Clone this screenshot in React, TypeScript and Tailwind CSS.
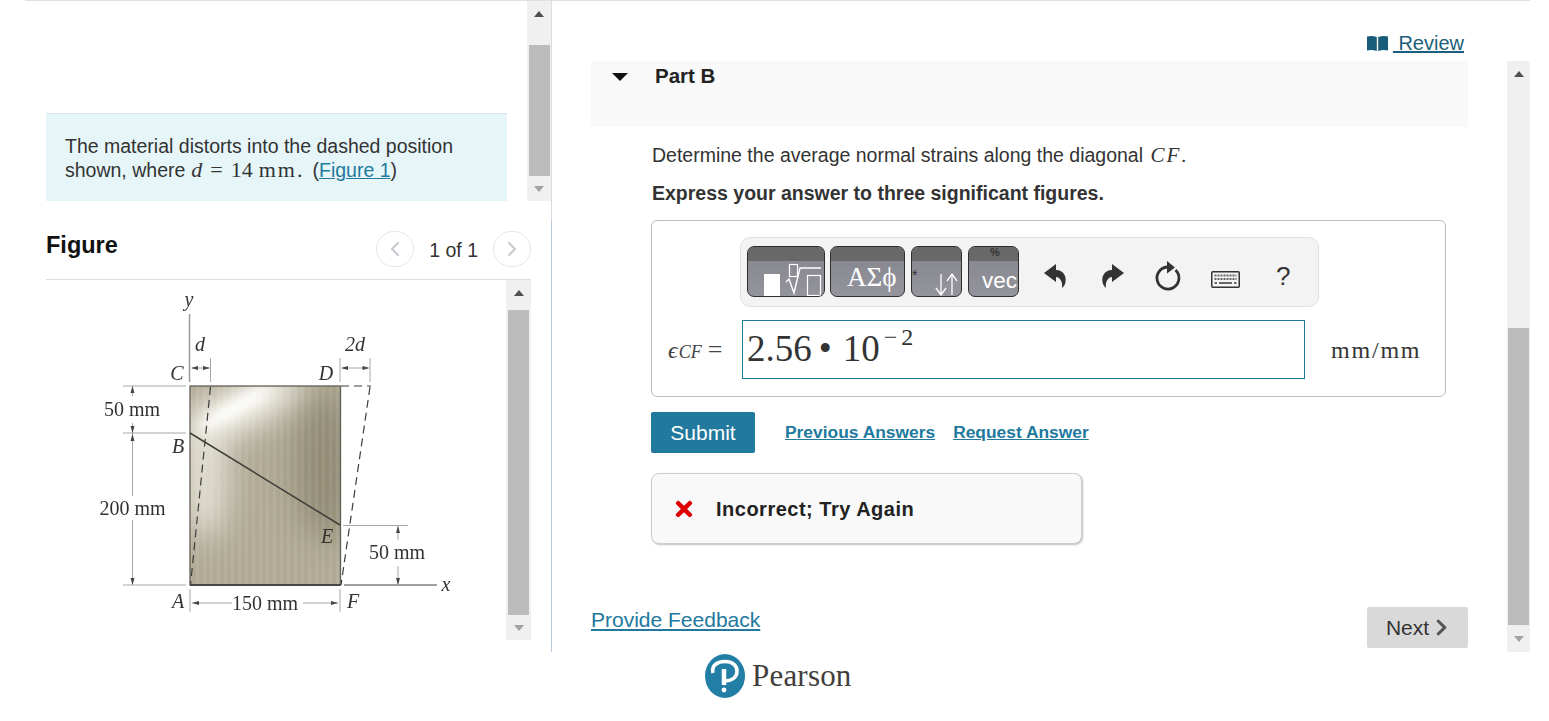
import { ChevronLeft, ChevronRight } from "lucide-react";
import { FaChevronRight, FaTimes } from "react-icons/fa";

const serif = "font-['Liberation_Serif',serif]";

// Fake browser scrollbar: top arrow, thumb, bottom arrow
function Scrollbar({ className, gapTop, thumb }: { className: string; gapTop: string; thumb: string }) {
  return (
    <div className={`flex flex-col items-center bg-[#f0f0f0] shrink-0 ${className}`}>
      <div className="h-[25px] shrink-0 flex items-center justify-center">
        <div className="w-0 h-0 border-x-[5.5px] border-x-transparent border-b-[6px] border-b-[#505050]" />
      </div>
      <div className={`shrink-0 ${gapTop}`} />
      <div className={`w-[21px] shrink-0 bg-[#bcbcbc] ${thumb}`} />
      <div className="flex-1 flex items-center justify-center">
        <div className="w-0 h-0 border-x-[5.5px] border-x-transparent border-t-[6px] border-t-[#a3a3a3]" />
      </div>
    </div>
  );
}

function Arrow({ x, y, dir }: { x: number; y: number; dir: "l" | "r" | "u" | "d" }) {
  const pts = {
    l: `${x},${y} ${x + 7},${y - 2} ${x + 7},${y + 2}`,
    r: `${x},${y} ${x - 7},${y - 2} ${x - 7},${y + 2}`,
    u: `${x},${y} ${x - 2},${y + 7} ${x + 2},${y + 7}`,
    d: `${x},${y} ${x - 2},${y - 7} ${x + 2},${y - 7}`,
  }[dir];
  return <polygon points={pts} fill="#444" />;
}

function Figure() {
  const dim = "#a8a8a8";
  return (
    <svg viewBox="46 280 460 360" className="w-[460px] h-[360px] shrink-0">
      <defs>
        <clipPath id="plateClip">
          <rect x="190" y="386" width="150.5" height="199" />
        </clipPath>
        <pattern id="grain" width="7" height="10" patternUnits="userSpaceOnUse">
          <rect width="3" height="10" fill="#ffffff" opacity="0.07" />
        </pattern>
        <filter id="soft">
          <feGaussianBlur stdDeviation="0.45" />
        </filter>
        <filter id="glow" x="-80%" y="-80%" width="260%" height="260%">
          <feGaussianBlur stdDeviation="15" />
        </filter>
        <filter id="glowTight" x="-50%" y="-80%" width="200%" height="260%">
          <feGaussianBlur stdDeviation="6" />
        </filter>
      </defs>
      <g filter="url(#soft)">
        <g clipPath="url(#plateClip)">
          <rect x="190" y="386" width="150.5" height="199" fill="#b0aa95" />
          <ellipse cx="325" cy="465" rx="30" ry="75" fill="#8c866f" opacity="0.85" filter="url(#glow)" />
          <ellipse cx="205" cy="475" rx="22" ry="65" fill="#e2dfd3" filter="url(#glow)" />
          <ellipse cx="245" cy="405" rx="62" ry="22" transform="rotate(-28 245 405)" fill="#f4f2ea" filter="url(#glow)" />
          <ellipse cx="235" cy="408" rx="42" ry="7" transform="rotate(-30 235 408)" fill="#ffffff" filter="url(#glowTight)" />
          <rect x="190" y="386" width="150.5" height="199" fill="url(#grain)" />
        </g>
        <rect x="190" y="386" width="150.5" height="199" fill="none" stroke="#625f54" strokeWidth="1.3" />
        <line x1="190" y1="585" x2="340.5" y2="585" stroke="#333" strokeWidth="1.6" />

        {/* dashed deformed shape */}
        <g stroke="#3c3c3c" strokeWidth="1.2" strokeDasharray="8 5" fill="none">
          <line x1="210.5" y1="387" x2="190.5" y2="585" />
          <line x1="370" y1="387" x2="341" y2="585" />
          <line x1="341" y1="386" x2="371" y2="386" />
        </g>

        <line x1="190" y1="433" x2="340" y2="525" stroke="#3f3d38" strokeWidth="1.5" />

        {/* axes */}
        <line x1="189.5" y1="314" x2="189.5" y2="382" stroke="#999" strokeWidth="1.5" />
        <line x1="344" y1="585" x2="437" y2="585" stroke="#444" strokeWidth="1.2" />

        {/* dimension lines */}
        <g stroke={dim} strokeWidth="1" fill="none">
          <line x1="123" y1="386" x2="186" y2="386" />
          <line x1="123" y1="433" x2="186" y2="433" />
          <line x1="123" y1="585" x2="186" y2="585" />
          <line x1="132.5" y1="386" x2="132.5" y2="396" />
          <line x1="132.5" y1="423" x2="132.5" y2="433" />
          <line x1="132.5" y1="433" x2="132.5" y2="496" />
          <line x1="132.5" y1="520" x2="132.5" y2="585" />
          <line x1="343" y1="525.5" x2="408" y2="525.5" />
          <line x1="398" y1="526" x2="398" y2="540" />
          <line x1="398" y1="566" x2="398" y2="585" />
          <line x1="210.5" y1="358" x2="210.5" y2="382" />
          <line x1="340" y1="358" x2="340" y2="382" />
          <line x1="370" y1="358" x2="370" y2="382" />
          <line x1="190" y1="589" x2="190" y2="612" />
          <line x1="340" y1="589" x2="340" y2="612" />
          <line x1="192" y1="603" x2="232" y2="603" />
          <line x1="303" y1="603" x2="338" y2="603" />
          <line x1="192" y1="368" x2="209" y2="368" />
          <line x1="342" y1="368" x2="368" y2="368" />
        </g>

        <Arrow x={132.5} y={386} dir="u" />
        <Arrow x={132.5} y={433} dir="d" />
        <Arrow x={132.5} y={434} dir="u" />
        <Arrow x={132.5} y={585} dir="d" />
        <Arrow x={398} y={526} dir="u" />
        <Arrow x={398} y={585} dir="d" />
        <Arrow x={191} y={368} dir="l" />
        <Arrow x={210} y={368} dir="r" />
        <Arrow x={341} y={368} dir="l" />
        <Arrow x={369.5} y={368} dir="r" />
        <Arrow x={192} y={603} dir="l" />
        <Arrow x={338} y={603} dir="r" />

        <g fontFamily="'Liberation Serif', serif" fontSize="20" fill="#333">
          <text x="132" y="416" textAnchor="middle">50 mm</text>
          <text x="132.5" y="515" textAnchor="middle">200 mm</text>
          <text x="397" y="559" textAnchor="middle">50 mm</text>
          <text x="265" y="610" textAnchor="middle">150 mm</text>
          <g fontStyle="italic">
            <text x="189" y="306" textAnchor="middle">y</text>
            <text x="200" y="351" textAnchor="middle">d</text>
            <text x="355" y="351" textAnchor="middle">2d</text>
            <text x="177" y="380" textAnchor="middle">C</text>
            <text x="326" y="380" textAnchor="middle">D</text>
            <text x="178" y="453" textAnchor="middle">B</text>
            <text x="327" y="543" textAnchor="middle">E</text>
            <text x="178" y="608" textAnchor="middle">A</text>
            <text x="353" y="608" textAnchor="middle">F</text>
            <text x="446" y="591" textAnchor="middle">x</text>
          </g>
        </g>
      </g>
    </svg>
  );
}

function ToolButton({ className, children }: { className: string; children: React.ReactNode }) {
  return (
    <div
      className={`relative h-[51px] rounded-[7px] border border-[#2e2e2e] overflow-hidden bg-linear-to-b from-[#84848e] to-[#94949c] shrink-0 ${className}`}
    >
      <div className="h-[14px] bg-[#686868]" />
      {children}
    </div>
  );
}

// curved arrow, head pointing left; the redo one is the same path flipped
function UndoShape({ className }: { className: string }) {
  return (
    <svg viewBox="0 0 26 28" className={`w-[26px] h-[28px] mt-[24px] shrink-0 ${className}`}>
      <path d="M2 11 L14 2 V8 C22 8 24.5 15 23.5 20 C23 23 21.5 25 20 26 C21 21 18.5 15 14 15 V20 Z" fill="#333" />
    </svg>
  );
}

function Toolbar() {
  return (
    <div className="ml-[88px] w-[579px] h-[70px] bg-[#f3f3f3] border border-[#e0e0e0] rounded-[10px] flex items-start pl-[6px]">
      <div className="flex mt-[8px]">
        <ToolButton className="w-[78px]">
          <div className="absolute left-[16px] bottom-0 w-[16px] h-[22px] bg-white" />
          <svg viewBox="748 247 76 49" className="absolute inset-0 w-[76px] h-[49px]" fill="none" stroke="#fff" strokeWidth="1.2">
            <rect x="789.5" y="264.5" width="8" height="12" />
            <path d="M786 282 L789 279 L794 293 L800 268 H821" strokeWidth="1.4" />
            <rect x="807.5" y="275.5" width="13" height="20" />
          </svg>
        </ToolButton>
        <ToolButton className="w-[75px] ml-[5px]">
          <div className={`absolute left-[16px] top-[14px] text-white text-[27px] leading-[32px] whitespace-nowrap ${serif}`}>ΑΣϕ</div>
        </ToolButton>
        <ToolButton className="w-[51px] ml-[6px]">
          <span className="absolute left-0 top-[21px] text-[14px] leading-none text-[#333]">*</span>
          <svg viewBox="0 0 24 24" className="absolute left-[22px] top-[25px] w-[24px] h-[24px]" fill="none" stroke="#fff" strokeWidth="1.3">
            <path d="M7 2 V23 M2 16 L7 23 L12 16 M18 23 V2 M13 9 L18 2 L23 9" />
          </svg>
        </ToolButton>
        <ToolButton className="w-[51px] ml-[6px]">
          <span className="absolute left-[21px] top-0 text-[11px] font-bold leading-none text-[#333]">%</span>
          <div className="absolute left-[13px] top-[20px] text-white text-[22.5px] leading-[28px]">vec</div>
        </ToolButton>
      </div>
      <UndoShape className="ml-[23px]" />
      <UndoShape className="ml-[32px] -scale-x-100" />
      <svg viewBox="1154 260 30 32" className="ml-[28px] mt-[22px] w-[30px] h-[32px] shrink-0" fill="none" stroke="#333" strokeWidth="2.8">
        <path d="M1175.5 270 A11 11 0 1 1 1168 267" />
        <polygon points="1167,261 1175,267.5 1167,273.5" fill="#333" stroke="none" />
      </svg>
      <svg viewBox="0 0 29 17" className="ml-[27px] mt-[33px] w-[29px] h-[17px] shrink-0" fill="none">
        <rect x="0.75" y="0.75" width="27.5" height="15.5" rx="1" stroke="#333" strokeWidth="1.5" />
        <path d="M3.5 4.5 H25.5 M3.5 8 H25.5" stroke="#666" strokeWidth="2" strokeDasharray="2 1" />
        <path d="M3.5 12 H6 M8 12 H21 M23 12 H25.5" stroke="#666" strokeWidth="2" />
      </svg>
      <span className="ml-[36px] mt-[25px] text-[26px] text-[#333] leading-[26px]">?</span>
    </div>
  );
}

export default function App() {
  return (
    <div className="w-[1549px] h-[721px] overflow-hidden bg-white pl-[25px] text-[19.5px] text-[#333] font-['Liberation_Sans',sans-serif]">
      <div className="w-[1505px] h-[1px] bg-[#e0e0e0]" />
      <div className="flex h-[651px]">
        {/* Left column */}
        <div className="w-[527px] shrink-0 flex flex-col">
          <div className="flex h-[219px] shrink-0 border-r border-[#dcdcdc] items-start">
            <div className="flex-1 pl-[21px] pr-[20px] pt-[112px]">
              <div className="h-[88px] bg-[#e6f6f8] border-t border-[#dbe6e8] pl-[19px] pt-[20px] leading-[24px]">
                <div className="whitespace-nowrap">The material distorts into the dashed position</div>
                <div className="whitespace-nowrap">
                  shown, where
                  <i className={`${serif} text-[22px] ml-[6px]`}>d</i>
                  <span className={`${serif} text-[22px] ml-[8px]`}>=</span>
                  <span className={`${serif} text-[22px] ml-[8px]`}>14</span>
                  <span className={`${serif} text-[22px] ml-[6px] tracking-[2px]`}>mm.</span>
                  <span className="ml-[8px]">(</span>
                  <span className="text-[#1f7a9e] underline">Figure 1</span>)
                </div>
              </div>
            </div>
            <Scrollbar className="w-[24px] h-[200px]" gapTop="h-[19px]" thumb="h-[131px]" />
          </div>

          <div className="flex-1 flex flex-col border-r border-[#bccbe0]">
            <div className="ml-[21px] mr-[20px] h-[60px] shrink-0 border-b border-[#dcdcdc] flex items-start justify-between pt-[10px]">
              <span className="font-bold text-[23.5px] text-[#111] leading-[30px]">Figure</span>
              <div className="flex items-center">
                <div className="w-[38px] h-[36px] rounded-full border border-[#e6e6e6] flex items-center justify-center">
                  <ChevronLeft className="w-[24px] h-[24px] text-[#c6c9ce]" />
                </div>
                <span className="mx-[15px] leading-[36px] pt-[2px]">1 of 1</span>
                <div className="w-[38px] h-[36px] rounded-full border border-[#e6e6e6] flex items-center justify-center">
                  <ChevronRight className="w-[24px] h-[24px] text-[#c6c9ce]" />
                </div>
              </div>
            </div>
            <div className="ml-[21px] mr-[20px] flex h-[360px] shrink-0">
              <Figure />
              <Scrollbar className="w-[25px] h-[360px]" gapTop="h-[5px]" thumb="h-[305px]" />
            </div>
          </div>
        </div>

        {/* Right column */}
        <div className="w-[978px] shrink-0 flex flex-col">
          <div className="h-[60px] shrink-0 flex items-start justify-end pr-[66px] pt-[30px]">
            <a className="flex items-center text-[#1c5f7c] text-[20px] leading-[24px]">
              <svg viewBox="0 0 21 15" className="w-[21px] h-[15px]">
                <path d="M0 0.5 Q5 -0.5 9.8 1 V15 Q5 13.5 0 14.5 Z" fill="#175c78" />
                <path d="M21 0.5 Q16 -0.5 11.2 1 V15 Q16 13.5 21 14.5 Z" fill="#175c78" />
              </svg>
              <span className="ml-[5px] underline whitespace-pre"> Review</span>
            </a>
          </div>
          <div className="flex-1 flex">
            <div className="w-[877px] ml-[39px] shrink-0 flex flex-col">
              <div className="h-[66px] shrink-0 bg-[#f9f9f9] flex items-start pl-[21px] pt-[3px]">
                <div className="mt-[9px] w-0 h-0 border-x-[8px] border-x-transparent border-t-[8px] border-t-[#111]" />
                <span className="ml-[27px] font-bold text-[20.5px] text-[#222] leading-[24px]">Part B</span>
              </div>

              <div className="mt-[16px] ml-[61px] leading-[24px] whitespace-nowrap">
                Determine the average normal strains along the diagonal{" "}
                <i className={`${serif} text-[21px] tracking-[2px] ml-[2px]`}>CF</i>
                <span className={serif}>.</span>
              </div>
              <div className="mt-[13px] ml-[61px] font-bold leading-[24px]">
                Express your answer to three significant figures.
              </div>

              <div className="mt-[15px] ml-[60px] w-[795px] h-[177px] shrink-0 border border-[#bbb] rounded-[6px] pt-[16px]">
                <Toolbar />
                <div className="mt-[13px] flex items-center">
                  <div className={`w-[90px] pl-[16px] text-[#444] whitespace-nowrap ${serif}`}>
                    <i className="text-[24px] mr-[1px]">ϵ</i>
                    <i className="text-[18px]">CF</i>
                    <span className="text-[26px] ml-[6px]">=</span>
                  </div>
                  <div className={`w-[563px] h-[59px] border border-[#1c7a9c] pl-[4px] text-[37px] leading-[56px] flex items-start whitespace-pre ${serif}`}>
                    <span>2.56</span>
                    <span className="ml-[7px]">•</span>
                    <span className="ml-[11px]">10</span>
                    <span className="ml-[4px] text-[24px] leading-[32px]">−</span>
                    <span className="ml-[4px] text-[24px] leading-[32px]">2</span>
                  </div>
                  <span className={`ml-[26px] text-[24px] tracking-[1.8px] ${serif}`}>mm/mm</span>
                </div>
              </div>

              <div className="mt-[15px] ml-[60px] flex items-center">
                <div className="w-[104px] h-[41px] rounded-[2px] bg-[#21799e] text-[21px] text-white flex items-center justify-center">Submit</div>
                <a className="ml-[30px] text-[17.4px] font-bold text-[#21799e] underline">Previous Answers</a>
                <a className="ml-[18px] text-[17.4px] font-bold text-[#21799e] underline">Request Answer</a>
              </div>

              <div className="mt-[20px] ml-[60px] w-[431px] h-[71px] shrink-0 bg-[#f9f9f9] border border-[#ccc] rounded-[8px] shadow-[1px_1px_2px_rgba(0,0,0,0.25)] flex items-center pl-[20px]">
                <FaTimes className="w-[24px] h-[24px] text-[#dd0000]" />
                <span className="ml-[20px] font-bold text-[20px] text-[#222] tracking-[0.5px]">Incorrect; Try Again</span>
              </div>

              <div className="mt-auto mb-[4px] flex items-end justify-between">
                <a className="text-[#21799e] text-[21px] underline leading-[24px] mb-[16px]">Provide Feedback</a>
                <div className="w-[101px] h-[41px] rounded-[2px] bg-[#d9d9d9] text-[21px] flex items-center justify-center gap-[5px]">
                  Next
                  <FaChevronRight className="w-[15px] h-[19px] text-[#555]" />
                </div>
              </div>
            </div>
            <div className="ml-[39px]">
              <Scrollbar className="w-[23px] h-[591px]" gapTop="h-[242px]" thumb="h-[297px]" />
            </div>
          </div>
        </div>
      </div>

      {/* Pearson logo */}
      <div className="flex items-center pl-[680px] pt-[1px]">
        <svg viewBox="0 0 40 44" className="w-[40px] h-[44px]">
          <ellipse cx="20" cy="22" rx="20" ry="22" fill="#237ea6" />
          <path d="M8 19 C6 11 13 7.5 20 7.5 C28 7.5 32 12 32 17 C32 24 26 27 20 27" fill="none" stroke="#fff" strokeWidth="3.6" />
          <path d="M19 15 V31" stroke="#fff" strokeWidth="4.5" />
          <circle cx="19" cy="36" r="2.4" fill="#fff" />
        </svg>
        <span className={`ml-[7px] text-[31px] tracking-[0.2px] text-[#413e3c] ${serif}`}>Pearson</span>
      </div>
    </div>
  );
}
